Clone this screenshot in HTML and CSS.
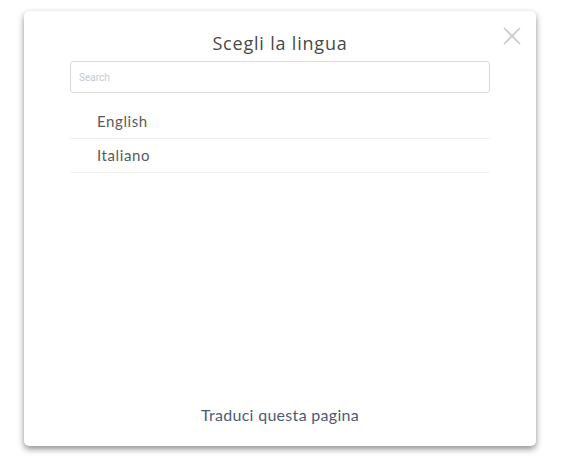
FILE: index.html
```html
<!DOCTYPE html>
<html lang="it">
<head>
<meta charset="utf-8">
<title>Scegli la lingua</title>
<link rel="stylesheet" href="styles.css">
</head>
<body>
<div class="page">
  <div class="modal">
    <button class="close" aria-label="Chiudi">
      <svg width="18" height="18" viewBox="0 0 18 18"><path d="M1 1L17 17M17 1L1 17" stroke="#c8c8c8" stroke-width="1.6" fill="none"/></svg>
    </button>
    <h1 class="title">Scegli la lingua</h1>
    <input class="search" type="text" placeholder="Search">
    <ul class="list">
      <li class="item">English</li>
      <li class="item">Italiano</li>
    </ul>
    <div class="footer">Traduci questa pagina</div>
  </div>
</div>
</body>
</html>
```
FILE: styles.css
```css
html, body { margin: 0; padding: 0; background: #fff; }
.page { padding: 11px 0 27px 24px; }
.modal {
  position: relative;
  box-sizing: border-box;
  width: 512px;
  height: 435px;
  background: #fff;
  border-radius: 5px;
  box-shadow: 0 3px 6px rgba(0,0,0,0.45);
  padding: 20px 46px 21px;
  display: flex;
  flex-direction: column;
  font-family: Lato, "Open Sans", sans-serif;
}
.close {
  position: absolute;
  top: 16px;
  right: 15px;
  width: 18px;
  height: 18px;
  padding: 0;
  border: 0;
  background: none;
  display: flex;
}
.title {
  margin: 0;
  text-align: center;
  font-family: "Open Sans", sans-serif;
  font-size: 18px;
  line-height: 24px;
  font-weight: 500;
  letter-spacing: 0.8px;
  color: #484848;
}
.search {
  margin-top: 6px;
  box-sizing: border-box;
  width: 100%;
  height: 32px;
  border: 1px solid #dcdcdc;
  border-radius: 3px;
  padding: 0 8px;
  font-family: Roboto, sans-serif;
  font-size: 10px;
  outline: none;
}
.search::placeholder { color: #c3cad6; }
.list { list-style: none; margin: 11px 0 0; padding: 0; }
.item {
  height: 34px;
  line-height: 34px;
  padding-left: 27px;
  border-bottom: 1px solid #eef0f2;
  font-size: 15px;
  letter-spacing: 0.6px;
  color: #5a5a5a;
}
.item + .item { height: 33px; line-height: 33px; }
.footer {
  margin-top: auto;
  text-align: center;
  font-size: 16px;
  line-height: 20px;
  letter-spacing: 0.3px;
  color: #4b5b76;
}
```
